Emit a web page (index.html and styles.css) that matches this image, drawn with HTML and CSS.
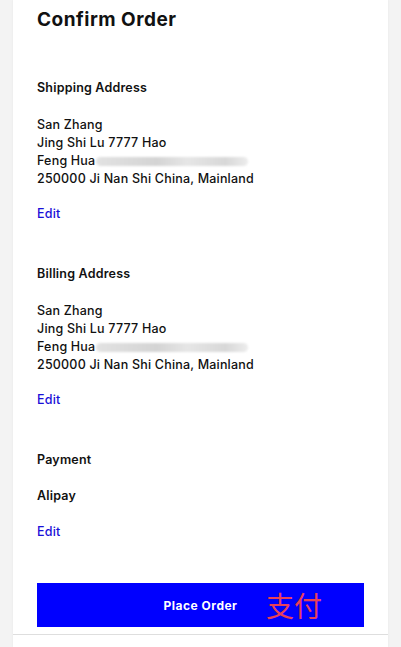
FILE: index.html
```html
<!DOCTYPE html>
<html lang="en">
<head>
<meta charset="utf-8">
<title>Confirm Order</title>
<link rel="stylesheet" href="styles.css">
</head>
<body>
<div class="card">
  <div class="inner">
    <h1 class="title">Confirm Order</h1>

    <section class="section">
      <h2 class="label">Shipping Address</h2>
      <div class="address">
        <div>San Zhang</div>
        <div>Jing Shi Lu 7777 Hao</div>
        <div>Feng Hua<span class="blur"></span></div>
        <div>250000 Ji Nan Shi China, Mainland</div>
      </div>
      <a class="edit" href="#">Edit</a>
    </section>

    <section class="section">
      <h2 class="label">Billing Address</h2>
      <div class="address">
        <div>San Zhang</div>
        <div>Jing Shi Lu 7777 Hao</div>
        <div>Feng Hua<span class="blur"></span></div>
        <div>250000 Ji Nan Shi China, Mainland</div>
      </div>
      <a class="edit" href="#">Edit</a>
    </section>

    <section class="section">
      <h2 class="label">Payment</h2>
      <div class="method">Alipay</div>
      <a class="edit edit-tight" href="#">Edit</a>
    </section>

    <button class="place" type="button">
      <span class="place-text">Place Order</span>
      <span class="note">支付</span>
    </button>
  </div>
  <div class="footer"></div>
</div>
</body>
</html>
```

FILE: styles.css
```css
* { box-sizing: border-box; }
html, body { margin: 0; padding: 0; }
body {
  background: #f3f3f3;
  font-family: "Inter", "Liberation Sans", sans-serif;
  color: #111;
}
.card {
  margin: 0 13px;
  background: #fff;
  box-shadow: 0 0 2px rgba(0,0,0,0.06);
  min-height: 647px;
}
.inner {
  padding: 8px 24px 7px 24px;
  border-bottom: 1px solid #dedede;
}
.title {
  margin: 0;
  font-size: 19px;
  line-height: 24px;
  font-weight: 700;
  letter-spacing: 0.5px;
}
.section { margin-top: 47px; }
.section + .section { margin-top: 42px; }
.label, .address, .method, .edit {
  font-size: 12.5px;
  line-height: 18px;
  letter-spacing: 0.2px;
}
.label {
  margin: 0;
  font-weight: 600;
}
.address {
  margin-top: 19px;
  font-weight: 500;
}
.method {
  margin-top: 18px;
  font-weight: 600;
}
.blur {
  display: inline-block;
  vertical-align: middle;
  width: 152px;
  height: 9px;
  margin-left: 1px;
  border-radius: 5px;
  background: linear-gradient(90deg, #e2e2e2 0%, #d4d4d4 40%, #e6e6e6 60%, #d8d8d8 85%, #ececec 100%);
  filter: blur(1px);
}
.edit {
  display: block;
  margin-top: 17px;
  color: #1a10d8;
  text-decoration: none;
  font-weight: 500;
}
.edit-tight { margin-top: 18px; }
.place {
  display: flex;
  align-items: center;
  justify-content: center;
  position: relative;
  width: 100%;
  height: 44px;
  margin-top: 42px;
  border: 0;
  background: #0000ff;
  color: #fff;
  font-family: "Inter", "Liberation Sans", sans-serif;
  font-size: 12px;
  font-weight: 700;
  letter-spacing: 0.5px;
  padding: 0;
}
.place-text { margin-left: 0; }
.note {
  position: absolute;
  left: 229px;
  top: 5px;
  font-family: "Noto Sans CJK SC", sans-serif;
  font-size: 28px;
  line-height: 34px;
  font-weight: 400;
  color: #e8405a;
  letter-spacing: 0;
}
.footer { height: 12px; }
```
